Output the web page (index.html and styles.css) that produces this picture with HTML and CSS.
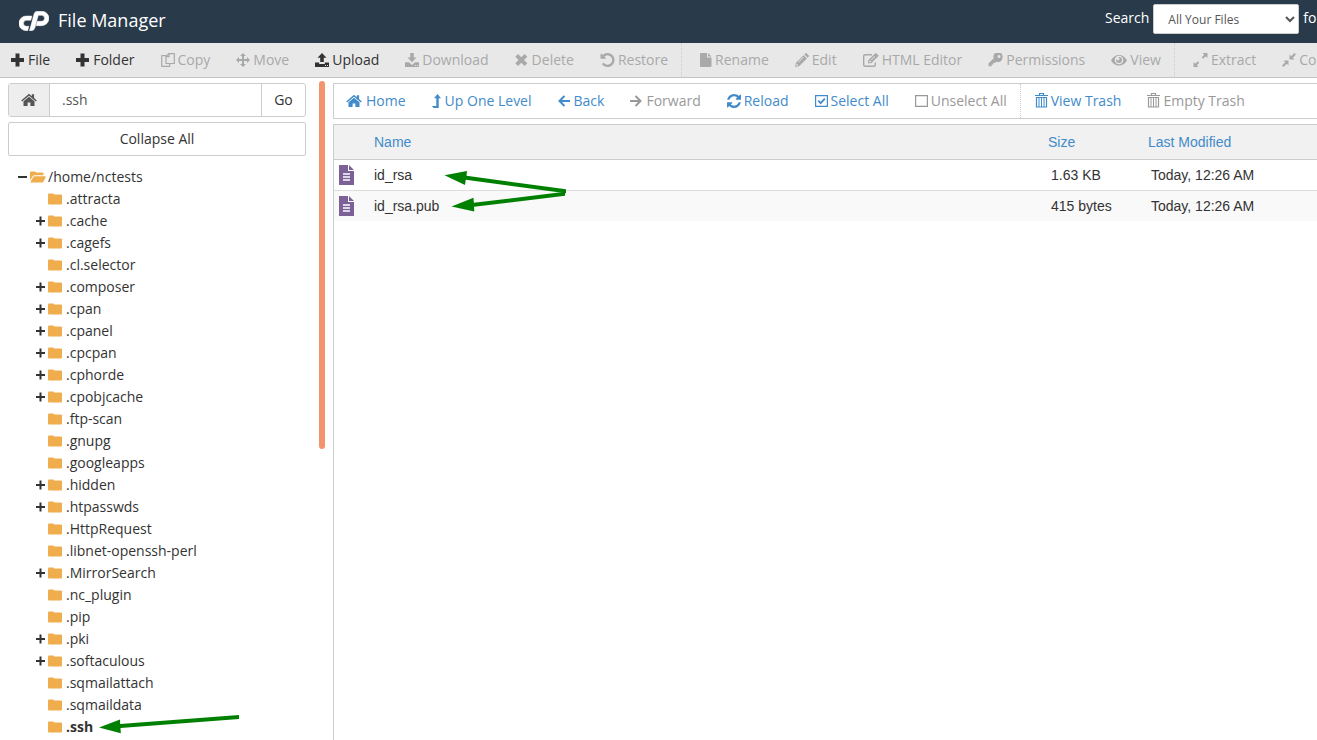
FILE: index.html
```html
<!DOCTYPE html>
<html lang="en">
<head>
    <meta charset="UTF-8">
    <title>File Manager</title>
    <link rel="stylesheet" href="styles.css">
</head>
<body>
<!-- icon sprite -->
<svg class="sprite" aria-hidden="true">
    <symbol id="plus" viewBox="0 0 14 14"><path d="M4.500 .5h4V5H13v4H8.500v4.500h-4V9H0V5h4.500z"/></symbol>
    <symbol id="copy" viewBox="0 0 14 14"><path d="M5 2.700H.7v10.600h8v-2.800M7.800.7h5.500v9.800H5V3.500zM8 .7v3H5" fill="none" stroke="currentColor" stroke-width="1.200" stroke-linejoin="round"/></symbol>
    <symbol id="move" viewBox="0 0 14 14"><path d="M7 0l3 3H8v3h3V4l3 3-3 3V8H8v3h2l-3 3-3-3h2V8H3v2L0 7l3-3v2h3V3H4z"/></symbol>
    <symbol id="upload" viewBox="0 0 14 14"><path d="M7 0l4.500 4.800H8.800V9H5.200V4.800H2.500zM0 9.500h4.200V11h5.600V9.500H14V14H0z"/><path d="M10 12h1v1h-1zM12 12h1v1h-1z" fill="#e8e8e8"/></symbol>
    <symbol id="download" viewBox="0 0 14 14"><path d="M5.200 0h3.600v4.500h2.700L7 9.200 2.500 4.500h2.700zM0 9.200h4L7 12l3-2.800h4V14H0z"/><path d="M10 12h1v1h-1zM12 12h1v1h-1z" fill="#e8e8e8"/></symbol>
    <symbol id="delete" viewBox="0 0 14 14"><path d="M3 1l3.300 3.300L9.600 1l2.700 2.700L9 7l3.300 3.300L9.600 13 6.300 9.700 3 13 .3 10.300 3.600 7 .3 3.700z"/></symbol>
    <symbol id="undo" viewBox="128 128 1536 1536"><path d="M1664 896q0 156-61 298t-164 245-245 164-298 61q-172 0-327-72.500t-264-204.500q-7-10-6.500-22.500t8.500-20.500l137-138q10-9 25-9 16 2 23 12 73 95 179 147t225 52q104 0 198.500-40.500t163.500-109.500 109.500-163.500 40.500-198.500-40.500-198.500-109.500-163.500-163.500-109.500-198.500-40.500q-98 0-188 35.500t-160 101.500l137 138q31 30 14 69-17 40-59 40h-448q-26 0-45-19t-19-45v-448q0-42 40-59 39-17 69 14l130 129q107-101 244.500-156.500t284.500-55.500q156 0 298 61t245 164 164 245 61 298z"/></symbol>
    <symbol id="file" viewBox="0 0 12 14"><path d="M1 0h6v4.500h4.500V13q0 1-1 1H1q-1 0-1-1V1q0-1 1-1zM8 0l3.500 3.500H8z"/></symbol>
    <symbol id="pencil" viewBox="0 0 14 14"><path fill-rule="evenodd" d="M0 14l1-4.300L8.500 2.200l3.400 3.400L4.400 13zM9.300 1.400L10.200.5q.8-.8 1.600 0l1.800 1.800q.7.700 0 1.500l-.9.900zM1.700 10.600L1.200 12.800l2.200-.5zM3 9l.5.500 5-5L8 4z"/></symbol>
    <symbol id="edit" viewBox="0 0 16 14"><path d="M9 1.700H2.200Q.7 1.700.7 3.200v8.600q0 1.500 1.500 1.500h8.600q1.500 0 1.500-1.500V9.500" fill="none" stroke="currentColor" stroke-width="1.400"/><path fill-rule="evenodd" d="M5 10.300V7.500L12 .5q.7-.7 1.500 0l1.600 1.600q.7.700 0 1.500l-6.900 6.700zM6.200 8v1.300h1.500l.6-.7L6.800 7.400zM8 6.700l.5.500 3.700-3.700-.5-.5z"/></symbol>
    <symbol id="key" viewBox="0 0 14 14"><path fill-rule="evenodd" d="M14 4.600A4.600 4.600 0 0 1 7.600 8.800L6.300 10H4.800v1.600H3.200v1.700H0v-2.800l5.200-5.200A4.600 4.600 0 1 1 14 4.600zM12 3.500a1.500 1.500 0 1 0-3 0 1.500 1.500 0 0 0 3 0z"/></symbol>
    <symbol id="eye" viewBox="0 0 16 14"><path fill-rule="evenodd" d="M0 7.500Q3 2 8 2t8 5.500Q13 12.500 8 12.500T0 7.500zM12.300 7A4.300 4.300 0 1 0 3.700 7a4.300 4.300 0 0 0 8.600 0zM11 7A3 3 0 1 1 5 7q0-.6.300-1.200A1.600 1.600 0 1 0 6.800 4.200Q7.400 4 8 4a3 3 0 0 1 3 3z"/></symbol>
    <symbol id="expand" viewBox="0 0 14 14"><path d="M9 0h5v5l-1.700-1.700-2.600 2.500-1.500-1.500 2.500-2.600zM0 9l1.700 1.700 2.500-2.500 1.600 1.500-2.500 2.600L5 14H0z"/></symbol>
    <symbol id="compress" viewBox="0 0 14 14"><path d="M7.500 1.500l1.700 1.700L12.400 0 14 1.600l-3.200 3.200 1.700 1.700h-5zM1.500 7.500h5v5l-1.700-1.700L1.600 14 0 12.400l3.200-3.200z"/></symbol>
    <symbol id="home" viewBox="0 0 16 14"><path d="M8 3.700l5.500 4.600V13H9.400V9.500H6.600V13H2.500V8.300zM8 .8l2.800 2.400V1.300h2.300v3.800L15.800 7.400l-.9 1L8 2.700 1.100 8.400l-.9-1z"/></symbol>
    <symbol id="levelup" viewBox="0 0 9 14"><path d="M5.500 0L9 4.300H6.700V14H1.500L0 12h4.300V4.300H2z"/></symbol>
    <symbol id="left" viewBox="0 0 12 14"><path d="M6.500 2L1.500 7l5 5M2 7h10" fill="none" stroke="currentColor" stroke-width="2"/></symbol>
    <symbol id="right" viewBox="0 0 12 14"><path d="M5.500 2l5 5-5 5M10 7H0" fill="none" stroke="currentColor" stroke-width="2"/></symbol>
    <symbol id="reload" viewBox="128 128 1536 1536"><path d="M1639 1056q0 5-1 7-64 268-268 434.500t-478 166.500q-146 0-282.500-55t-243.500-157l-129 129q-19 19-45 19t-45-19-19-45v-448q0-26 19-45t45-19h448q26 0 45 19t19 45-19 45l-137 137q71 66 161 102t187 36q134 0 250-65t186-179q11-17 53-117 8-23 30-23h192q13 0 22.500 9.500t9.500 22.500zm25-800v448q0 26-19 45t-45 19h-448q-26 0-45-19t-19-45 19-45l138-138q-148-137-349-137-134 0-250 65t-186 179q-11 17-53 117-8 23-30 23h-199q-13 0-22.500-9.500t-9.500-22.500v-7q65-268 270-434.500t480-166.500q146 0 284 55.500t245 156.500l130-129q19-19 45-19t45 19 19 45z"/></symbol>
    <symbol id="checked" viewBox="0 0 13 14"><path d="M.6 1.600h11.800v10.800H.6z" fill="none" stroke="currentColor" stroke-width="1.200"/><path d="M3.300 6.500l2.300 2.600 4.300-4.500" fill="none" stroke="currentColor" stroke-width="1.800"/></symbol>
    <symbol id="unchecked" viewBox="0 0 13 14"><path d="M.6 1.600h11.800v10.800H.6z" fill="none" stroke="currentColor" stroke-width="1.200"/></symbol>
    <symbol id="trash" viewBox="0 0 13 16"><path d="M0 2.500h13M4.500 2.500v-2h4v2M1.500 4.500h10v9.500h-10z" fill="none" stroke="currentColor" stroke-width="1.200"/><path d="M4 4.500V14M6.500 4.500V14M9 4.500V14" fill="none" stroke="currentColor"/></symbol>
    <symbol id="folder" viewBox="0 0 14 12"><path d="M1 .5h4q1 0 1 1h7q1 0 1 1v8q0 1-1 1H1q-1 0-1-1v-9q0-1 1-1z"/></symbol>
    <symbol id="folder-open" viewBox="0 0 16 12"><path d="M0 9.500v-8Q0 .5 1 .5h4q1 0 1 1h6.500q1 0 1 1v1.700H4.500q-1 0-1.700.9zM.2 11.500l3-5.500q.4-.8 1.300-.8H15q1.200 0 .7 1l-2.300 4.500q-.4.800-1.300.8z"/></symbol>
    <symbol id="expander" viewBox="0 0 9 10"><path d="M3.500 .5h2V4H9v2H5.500v3.500h-2V6H0V4h3.500z"/></symbol>
    <symbol id="collapser" viewBox="0 0 9 10"><path d="M0 4h9v2H0z"/></symbol>
</svg>

<header class="header">
    <svg class="logo" viewBox="0 0 30 20" role="img" aria-label="cPanel"><path stroke="#fff" stroke-width=".5" d="M12.800 5H7.200a7.300 7.300 0 0 0 0 14.700h1.500l1.200-4.400H7.500a3 3 0 0 1 0-6h4.200q.9-1.900 1.100-4.300zM10.500 19.700L15.200 2.500Q16 .2 18.500 .2h4.200a7.200 7.200 0 0 1 0 14.500h-5.500l1.200-4.400h4.100a3 3 0 0 0 0-6h-3.200l-3.500 12.800q-.8 2.600-3.300 2.600z"/></svg>
    <h1 class="title">File Manager</h1>
    <form class="search">
        <label for="scope">Search</label>
        <select id="scope" class="scope">
            <option>All Your Files</option>
        </select>
        <span>for</span>
    </form>
</header>

<nav class="toolbar">
    <button class="tool"><svg><use href="#plus"/></svg>File</button>
    <button class="tool"><svg><use href="#plus"/></svg>Folder</button>
    <button class="tool" disabled><svg><use href="#copy"/></svg>Copy</button>
    <button class="tool" disabled><svg><use href="#move"/></svg>Move</button>
    <button class="tool"><svg><use href="#upload"/></svg>Upload</button>
    <button class="tool" disabled><svg><use href="#download"/></svg>Download</button>
    <button class="tool" disabled><svg><use href="#delete"/></svg>Delete</button>
    <button class="tool" disabled><svg class="round"><use href="#undo"/></svg>Restore</button>
    <button class="tool split" disabled><svg class="narrow"><use href="#file"/></svg>Rename</button>
    <button class="tool" disabled><svg><use href="#pencil"/></svg>Edit</button>
    <button class="tool" disabled><svg class="wide"><use href="#edit"/></svg>HTML Editor</button>
    <button class="tool" disabled><svg class="round"><use href="#key"/></svg>Permissions</button>
    <button class="tool" disabled><svg class="wide"><use href="#eye"/></svg>View</button>
    <button class="tool split" disabled><svg class="round"><use href="#expand"/></svg>Extract</button>
    <button class="tool" disabled><svg><use href="#compress"/></svg>Compress</button>
</nav>

<main class="main">
    <aside class="sidebar">
        <form class="path">
            <button type="button" class="path-home" aria-label="Home"><svg class="wide"><use href="#home"/></svg></button>
            <input type="text" class="path-input" value=".ssh" aria-label="Path">
            <button type="button" class="path-go">Go</button>
        </form>
        <button class="collapse">Collapse All</button>
        <ul class="tree">
            <li>
                <div class="node"><button class="toggle" aria-label="Collapse"><svg><use href="#collapser"/></svg></button><svg class="folder open"><use href="#folder-open"/></svg><a href="#">/home/nctests</a></div>
                <ul>
                    <li class="node"><span class="toggle"></span><svg class="folder"><use href="#folder"/></svg><a href="#">.attracta</a></li>
                    <li class="node"><button class="toggle" aria-label="Expand"><svg><use href="#expander"/></svg></button><svg class="folder"><use href="#folder"/></svg><a href="#">.cache</a></li>
                    <li class="node"><button class="toggle" aria-label="Expand"><svg><use href="#expander"/></svg></button><svg class="folder"><use href="#folder"/></svg><a href="#">.cagefs</a></li>
                    <li class="node"><span class="toggle"></span><svg class="folder"><use href="#folder"/></svg><a href="#">.cl.selector</a></li>
                    <li class="node"><button class="toggle" aria-label="Expand"><svg><use href="#expander"/></svg></button><svg class="folder"><use href="#folder"/></svg><a href="#">.composer</a></li>
                    <li class="node"><button class="toggle" aria-label="Expand"><svg><use href="#expander"/></svg></button><svg class="folder"><use href="#folder"/></svg><a href="#">.cpan</a></li>
                    <li class="node"><button class="toggle" aria-label="Expand"><svg><use href="#expander"/></svg></button><svg class="folder"><use href="#folder"/></svg><a href="#">.cpanel</a></li>
                    <li class="node"><button class="toggle" aria-label="Expand"><svg><use href="#expander"/></svg></button><svg class="folder"><use href="#folder"/></svg><a href="#">.cpcpan</a></li>
                    <li class="node"><button class="toggle" aria-label="Expand"><svg><use href="#expander"/></svg></button><svg class="folder"><use href="#folder"/></svg><a href="#">.cphorde</a></li>
                    <li class="node"><button class="toggle" aria-label="Expand"><svg><use href="#expander"/></svg></button><svg class="folder"><use href="#folder"/></svg><a href="#">.cpobjcache</a></li>
                    <li class="node"><span class="toggle"></span><svg class="folder"><use href="#folder"/></svg><a href="#">.ftp-scan</a></li>
                    <li class="node"><span class="toggle"></span><svg class="folder"><use href="#folder"/></svg><a href="#">.gnupg</a></li>
                    <li class="node"><span class="toggle"></span><svg class="folder"><use href="#folder"/></svg><a href="#">.googleapps</a></li>
                    <li class="node"><button class="toggle" aria-label="Expand"><svg><use href="#expander"/></svg></button><svg class="folder"><use href="#folder"/></svg><a href="#">.hidden</a></li>
                    <li class="node"><button class="toggle" aria-label="Expand"><svg><use href="#expander"/></svg></button><svg class="folder"><use href="#folder"/></svg><a href="#">.htpasswds</a></li>
                    <li class="node"><span class="toggle"></span><svg class="folder"><use href="#folder"/></svg><a href="#">.HttpRequest</a></li>
                    <li class="node"><span class="toggle"></span><svg class="folder"><use href="#folder"/></svg><a href="#">.libnet-openssh-perl</a></li>
                    <li class="node"><button class="toggle" aria-label="Expand"><svg><use href="#expander"/></svg></button><svg class="folder"><use href="#folder"/></svg><a href="#">.MirrorSearch</a></li>
                    <li class="node"><span class="toggle"></span><svg class="folder"><use href="#folder"/></svg><a href="#">.nc_plugin</a></li>
                    <li class="node"><span class="toggle"></span><svg class="folder"><use href="#folder"/></svg><a href="#">.pip</a></li>
                    <li class="node"><button class="toggle" aria-label="Expand"><svg><use href="#expander"/></svg></button><svg class="folder"><use href="#folder"/></svg><a href="#">.pki</a></li>
                    <li class="node"><button class="toggle" aria-label="Expand"><svg><use href="#expander"/></svg></button><svg class="folder"><use href="#folder"/></svg><a href="#">.softaculous</a></li>
                    <li class="node"><span class="toggle"></span><svg class="folder"><use href="#folder"/></svg><a href="#">.sqmailattach</a></li>
                    <li class="node"><span class="toggle"></span><svg class="folder"><use href="#folder"/></svg><a href="#">.sqmaildata</a></li>
                    <li class="node current"><span class="toggle"></span><svg class="folder"><use href="#folder"/></svg><a href="#">.ssh</a></li>
                </ul>
            </li>
        </ul>
    </aside>

    <div class="resizer"></div>

    <section class="content">
        <nav class="actions">
            <button class="tool"><svg class="wide"><use href="#home"/></svg>Home</button>
            <button class="tool"><svg class="slim"><use href="#levelup"/></svg>Up One Level</button>
            <button class="tool"><svg class="narrow"><use href="#left"/></svg>Back</button>
            <button class="tool" disabled><svg class="narrow"><use href="#right"/></svg>Forward</button>
            <button class="tool tight"><svg><use href="#reload"/></svg>Reload</button>
            <button class="tool tight"><svg class="box"><use href="#checked"/></svg>Select All</button>
            <button class="tool tight" disabled><svg class="box"><use href="#unchecked"/></svg>Unselect All</button>
            <button class="tool tight split"><svg class="bin"><use href="#trash"/></svg>View Trash</button>
            <button class="tool tight" disabled><svg class="bin"><use href="#trash"/></svg>Empty Trash</button>
        </nav>
        <div class="files">
            <table>
                <thead>
                    <tr><th class="col-icon"></th><th>Name</th><th class="col-size">Size</th><th class="col-date">Last Modified</th></tr>
                </thead>
                <tbody>
                    <tr>
                        <td class="col-icon"><svg class="doc" viewBox="0 0 15 20"><path d="M0 0h9v6h6v14H0zM10 0l5 5h-5z"/><path d="M4 9h7M4 12h7M4 15h7" stroke="#fff" stroke-width="1.400"/></svg></td>
                        <td>id_rsa</td><td class="col-size">1.63 KB</td><td class="col-date">Today, 12:26 AM</td>
                    </tr>
                    <tr>
                        <td class="col-icon"><svg class="doc" viewBox="0 0 15 20"><path d="M0 0h9v6h6v14H0zM10 0l5 5h-5z"/><path d="M4 9h7M4 12h7M4 15h7" stroke="#fff" stroke-width="1.400"/></svg></td>
                        <td>id_rsa.pub</td><td class="col-size">415 bytes</td><td class="col-date">Today, 12:26 AM</td>
                    </tr>
                </tbody>
            </table>
        </div>
    </section>
</main>

<!-- arrows over the key files and the .ssh folder -->
<svg class="arrows" aria-hidden="true">
    <path d="M444.500 175.300L467 171l-.5 4.800L566 189.300v4L465.800 179.800 465 185z"/>
    <path d="M451.500 206.500L473.500 197.800l.3 5L565 191.800v4L474 206.800l.3 4.700z"/>
    <path d="M99 727.600L120 719.500l.2 4.500L239 715v4L120.500 728l.3 5.200z"/>
</svg>
</body>
</html>
```

FILE: styles.css
```css
*{box-sizing:border-box;}
body{margin:0;height:100vh;display:flex;flex-direction:column;overflow:hidden;position:relative;background:#fff;color:#333;font:14px/20px "Open Sans","Noto Sans",sans-serif;}
button,input,select{font:inherit;color:inherit;margin:0;}
button{background:none;border:0;padding:0;}
a{color:inherit;text-decoration:none;}
ul{list-style:none;margin:0;padding:0;}
svg{fill:currentColor;flex:none;}
.sprite{position:absolute;width:0;height:0;}

.header{display:flex;align-items:flex-start;flex:none;height:43px;padding-left:19px;background:#293a4a;color:#fff;overflow:hidden;}
.logo{width:30px;height:20px;margin-top:11px;}
.title{margin:8px 0 0 9px;font-size:18px;line-height:24px;font-weight:400;}
.search{display:flex;align-items:center;gap:4px;margin:4px 0 0 auto;width:212px;white-space:nowrap;}
.search label,.search span{height:22px;}
.scope{flex:none;width:146px;height:30px;padding:0 0 0 10px;border:1px solid #ccc;border-radius:2px;background:#fff;color:#555;font-size:12px;}

.toolbar,.actions{display:flex;flex:none;overflow:hidden;}
.toolbar{height:35px;background:#e8e8e8;border-bottom:1px solid #c4c4c4;}
.tool{display:flex;flex:none;align-items:center;gap:4px;padding:0 13px;white-space:nowrap;}
.toolbar .tool,.tight{gap:3px;}
.toolbar .tool:first-child{padding-left:11px;}
.tool svg{width:14px;height:14px;}
.tool .wide,.path .wide{width:16px;height:14px;}
.tool .round{width:15px;}
.tool .narrow{width:12px;}
.tool .box{width:13px;}
.tool .slim{width:9px;}
.tool .bin{width:13px;height:16px;}
.tool:disabled{color:#a9a9a9;}
.split{border-left:1px dotted #ccc;}
.toolbar .split{padding-left:18px;}

.main{display:flex;flex:1;min-height:0;padding-top:5px;}
.sidebar{flex:none;width:306px;padding-left:8px;overflow:hidden;}
.path{display:flex;height:34px;margin-bottom:5px;border:1px solid #ccc;border-radius:3px;}
.path-home{width:41px;display:flex;align-items:center;justify-content:center;background:#eee;border-right:1px solid #ccc;color:#555;}
.path-input{flex:1;min-width:0;padding:0 12px;border:0;color:#555;}
.path-go{width:44px;border-left:1px solid #ccc;}
.collapse{width:100%;height:34px;border:1px solid #ccc;border-radius:2px;}
.tree{padding:10px 0 0 10px;}
.tree ul{padding-left:18px;}
.node{display:flex;align-items:center;height:22px;}
.toggle{display:flex;flex:none;width:12px;}
.toggle svg{width:9px;height:10px;}
.folder{width:14px;height:12px;margin-right:4px;color:#f0ad4e;}
.open{width:16px;margin-right:2px;}
.current{font-weight:700;}

.resizer{flex:none;width:6px;height:368px;margin:-2px 8px 0 13px;border-radius:3px;background:#f4946c;}

.content{flex:1;min-width:0;display:flex;flex-direction:column;gap:5px;}
.actions{height:36px;border:1px solid #ccc;border-right:0;color:#428bca;}
.actions .tool:first-child{padding-left:12px;}
.actions .tool:disabled{color:#999;}
.actions .split{padding-left:14px;}
.files{flex:1;border:1px solid #ccc;border-width:1px 0 0 1px;font-family:"Liberation Sans",Arial,sans-serif;}
table{width:100%;table-layout:fixed;border-collapse:collapse;}
th,td{padding:0;text-align:left;white-space:nowrap;}
th{height:34px;background:#f1f1f1;border-bottom:1px solid #ccc;color:#428bca;font-weight:400;}
td{height:31px;border-bottom:1px solid #ddd;}
tbody tr:last-child td{background:#f9f9f9;border-bottom:0;}
.col-icon{width:40px;}
.col-size{width:100px;}
.col-date{width:169px;}
td.col-size,td.col-date{padding-left:3px;}
td.col-icon{padding-left:5px;}
.doc{display:block;width:15px;height:20px;fill:#7b6198;}

.arrows{position:absolute;left:0;top:0;width:100%;height:100%;fill:#008000;pointer-events:none;}
```
